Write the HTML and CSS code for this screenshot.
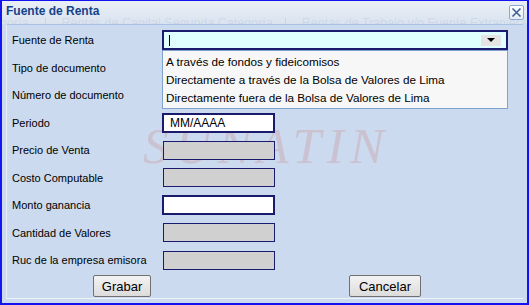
FILE: index.html
```html
<!DOCTYPE html>
<html lang="es">
<head>
<meta charset="UTF-8" />
<title>Fuente de Renta</title>
<link rel="stylesheet" href="styles.css">
</head>
<body>

<div class="window">
  <div class="titlebar">
    <div class="ghost-tabs">
      <span class="ghost-tab first">goría</span>
      <span class="ghost-tab second">Rentas de Capital Segunda Categoría</span>
      <span class="ghost-tab third">Rentas de Trabajo y/o Fuente Extranjera</span>
      <span class="ghost-tab">Determina</span>
    </div>
    <span class="title">Fuente de Renta</span>
    <span class="close-btn">
      <svg width="11" height="11" viewBox="0 0 11 11"><path d="M1.5 1.5 L9.5 9.5 M9.5 1.5 L1.5 9.5" stroke="#3d5f91" stroke-width="1.6" fill="none"/></svg>
    </span>
  </div>

  <div class="panel">
    <div class="watermark">SUNATIN</div>

    <div class="form">
      <label>Fuente de Renta</label>
      <div class="combo-wrap">
        <div class="combo">
          <span class="caret"></span>
          <span class="combo-btn"><span class="arrow"></span></span>
        </div>
        <ul class="combo-list">
          <li>A través de fondos y fideicomisos</li>
          <li>Directamente a través de la Bolsa de Valores de Lima</li>
          <li>Directamente fuera de la Bolsa de Valores de Lima</li>
        </ul>
      </div>

      <label>Tipo de documento</label>
      <div></div>

      <label>Número de documento</label>
      <div></div>

      <label>Periodo</label>
      <div class="input">MM/AAAA</div>

      <label>Precio de Venta</label>
      <div class="input-off"></div>

      <label>Costo Computable</label>
      <div class="input-off"></div>

      <label>Monto ganancia</label>
      <div class="input"></div>

      <label>Cantidad de Valores</label>
      <div class="input-off"></div>

      <label>Ruc de la empresa emisora</label>
      <div class="input-off"></div>
    </div>

    <div class="buttons">
      <button class="btn btn-save">Grabar</button>
      <button class="btn">Cancelar</button>
    </div>
  </div>
</div>

</body>
</html>
```

FILE: styles.css
```css
body {
  margin: 0;
  font-family: "Liberation Sans", Arial, sans-serif;
  background: #cbdaee;
}
.window {
  width: 529px;
  height: 305px;
  box-sizing: border-box;
  border: 2px solid #1414f0;
  border-top-width: 1px;
  background: #cbdaee;
  overflow: hidden;
}
.titlebar {
  position: relative;
  height: 23px;
  background: linear-gradient(#eaeff6, #d9e3ef);
  display: flex;
  align-items: center;
  overflow: hidden;
}
/* tabs of the page behind, seen through the title bar */
.ghost-tabs {
  position: absolute;
  left: -2px;
  top: 17px;
  display: flex;
  font-size: 12.5px;
  line-height: 10px;
  color: rgba(150,170,200,0.22);
  white-space: nowrap;
}
.ghost-tab {
  padding: 0 14px 0 14px;
  border-left: 1px solid rgba(160,180,205,0.3);
}
.ghost-tab.first {
  border-left: none;
  padding: 0 16px 0 0;
}
.ghost-tab.second {
  padding: 0 12px 0 16px;
}
.ghost-tab.third {
  padding: 0 14px 0 16px;
}
.title {
  position: relative;
  margin-left: 4px;
  margin-top: -3px;
  font-size: 12px;
  font-weight: bold;
  color: #15428b;
}
.close-btn {
  position: absolute;
  right: 3px;
  top: 4px;
  width: 13px;
  height: 13px;
  border: 1px solid #8fa9d6;
  border-radius: 2px;
  background: linear-gradient(#ffffff, #e3ebf6);
  display: flex;
  align-items: center;
  justify-content: center;
}

.panel {
  position: relative;
  margin-left: 4px;
  margin-right: 4px;
  height: 275px;
  box-sizing: border-box;
  border-top: 1px solid #a9c1e2;
  border-left: 1px solid #e6edf7;
  border-bottom: 1px solid #eef3fa;
  padding-top: 1px;
}
.watermark {
  position: absolute;
  left: 136px;
  top: 96px;
  font-family: "Liberation Serif", "Times New Roman", serif;
  font-style: italic;
  font-size: 51px;
  line-height: 50px;
  letter-spacing: 6px;
  color: #cbc2d1;
}
.form {
  position: relative;
  display: grid;
  grid-template-columns: 150px 1fr;
  grid-template-rows: 28px 27px 28px 27px 28px 27px 28px 27px 28px;
  align-items: center;
  padding-left: 5px;
}
.form label {
  font-size: 11px;
  color: #000;
}
.combo-wrap {
  position: relative;
  z-index: 2;
}
.combo {
  width: 346px;
  height: 20px;
  box-sizing: border-box;
  border: 2px solid #1b1b6e;
  background: #dfffff;
  display: flex;
  align-items: center;
  justify-content: space-between;
  padding: 0 5px 0 5px;
}
.caret {
  width: 1px;
  height: 11px;
  background: #000;
}
.combo-btn {
  width: 20px;
  height: 11px;
  background: #e4e4e4;
  display: flex;
  align-items: center;
  justify-content: center;
}
.arrow {
  width: 0;
  height: 0;
  border-left: 4px solid transparent;
  border-right: 4px solid transparent;
  border-top: 4px solid #000;
}
.combo-list {
  position: absolute;
  top: 20px;
  left: 0;
  width: 346px;
  box-sizing: border-box;
  margin: 0;
  padding: 2px 0 1px;
  list-style: none;
  background: #f7f7f7;
  border: 1px solid #7fa2cf;
  font-size: 11.7px;
}
.combo-list li {
  height: 18px;
  line-height: 18px;
  padding-left: 3px;
  white-space: nowrap;
}
.input {
  width: 113px;
  height: 20px;
  box-sizing: border-box;
  border: 2px solid #1b1b6e;
  background: #fff;
  font-size: 12px;
  line-height: 16px;
  padding-left: 6px;
}
.input-off {
  width: 112px;
  height: 19px;
  margin-left: 1px;
  box-sizing: border-box;
  border: 1px solid #1b1b6e;
  background: #d0d0d0;
}
.buttons {
  display: flex;
  gap: 198px;
  padding-left: 86px;
  margin-top: 1px;
}
.btn {
  height: 22px;
  padding: 0;
  border: 1px solid #707070;
  border-radius: 2px;
  background: linear-gradient(#f3f3f3, #dcdcdc);
  font-family: "Liberation Sans", Arial, sans-serif;
  font-size: 13px;
  color: #000;
  width: 72px;
}
.btn-save {
  width: 58px;
}
```
